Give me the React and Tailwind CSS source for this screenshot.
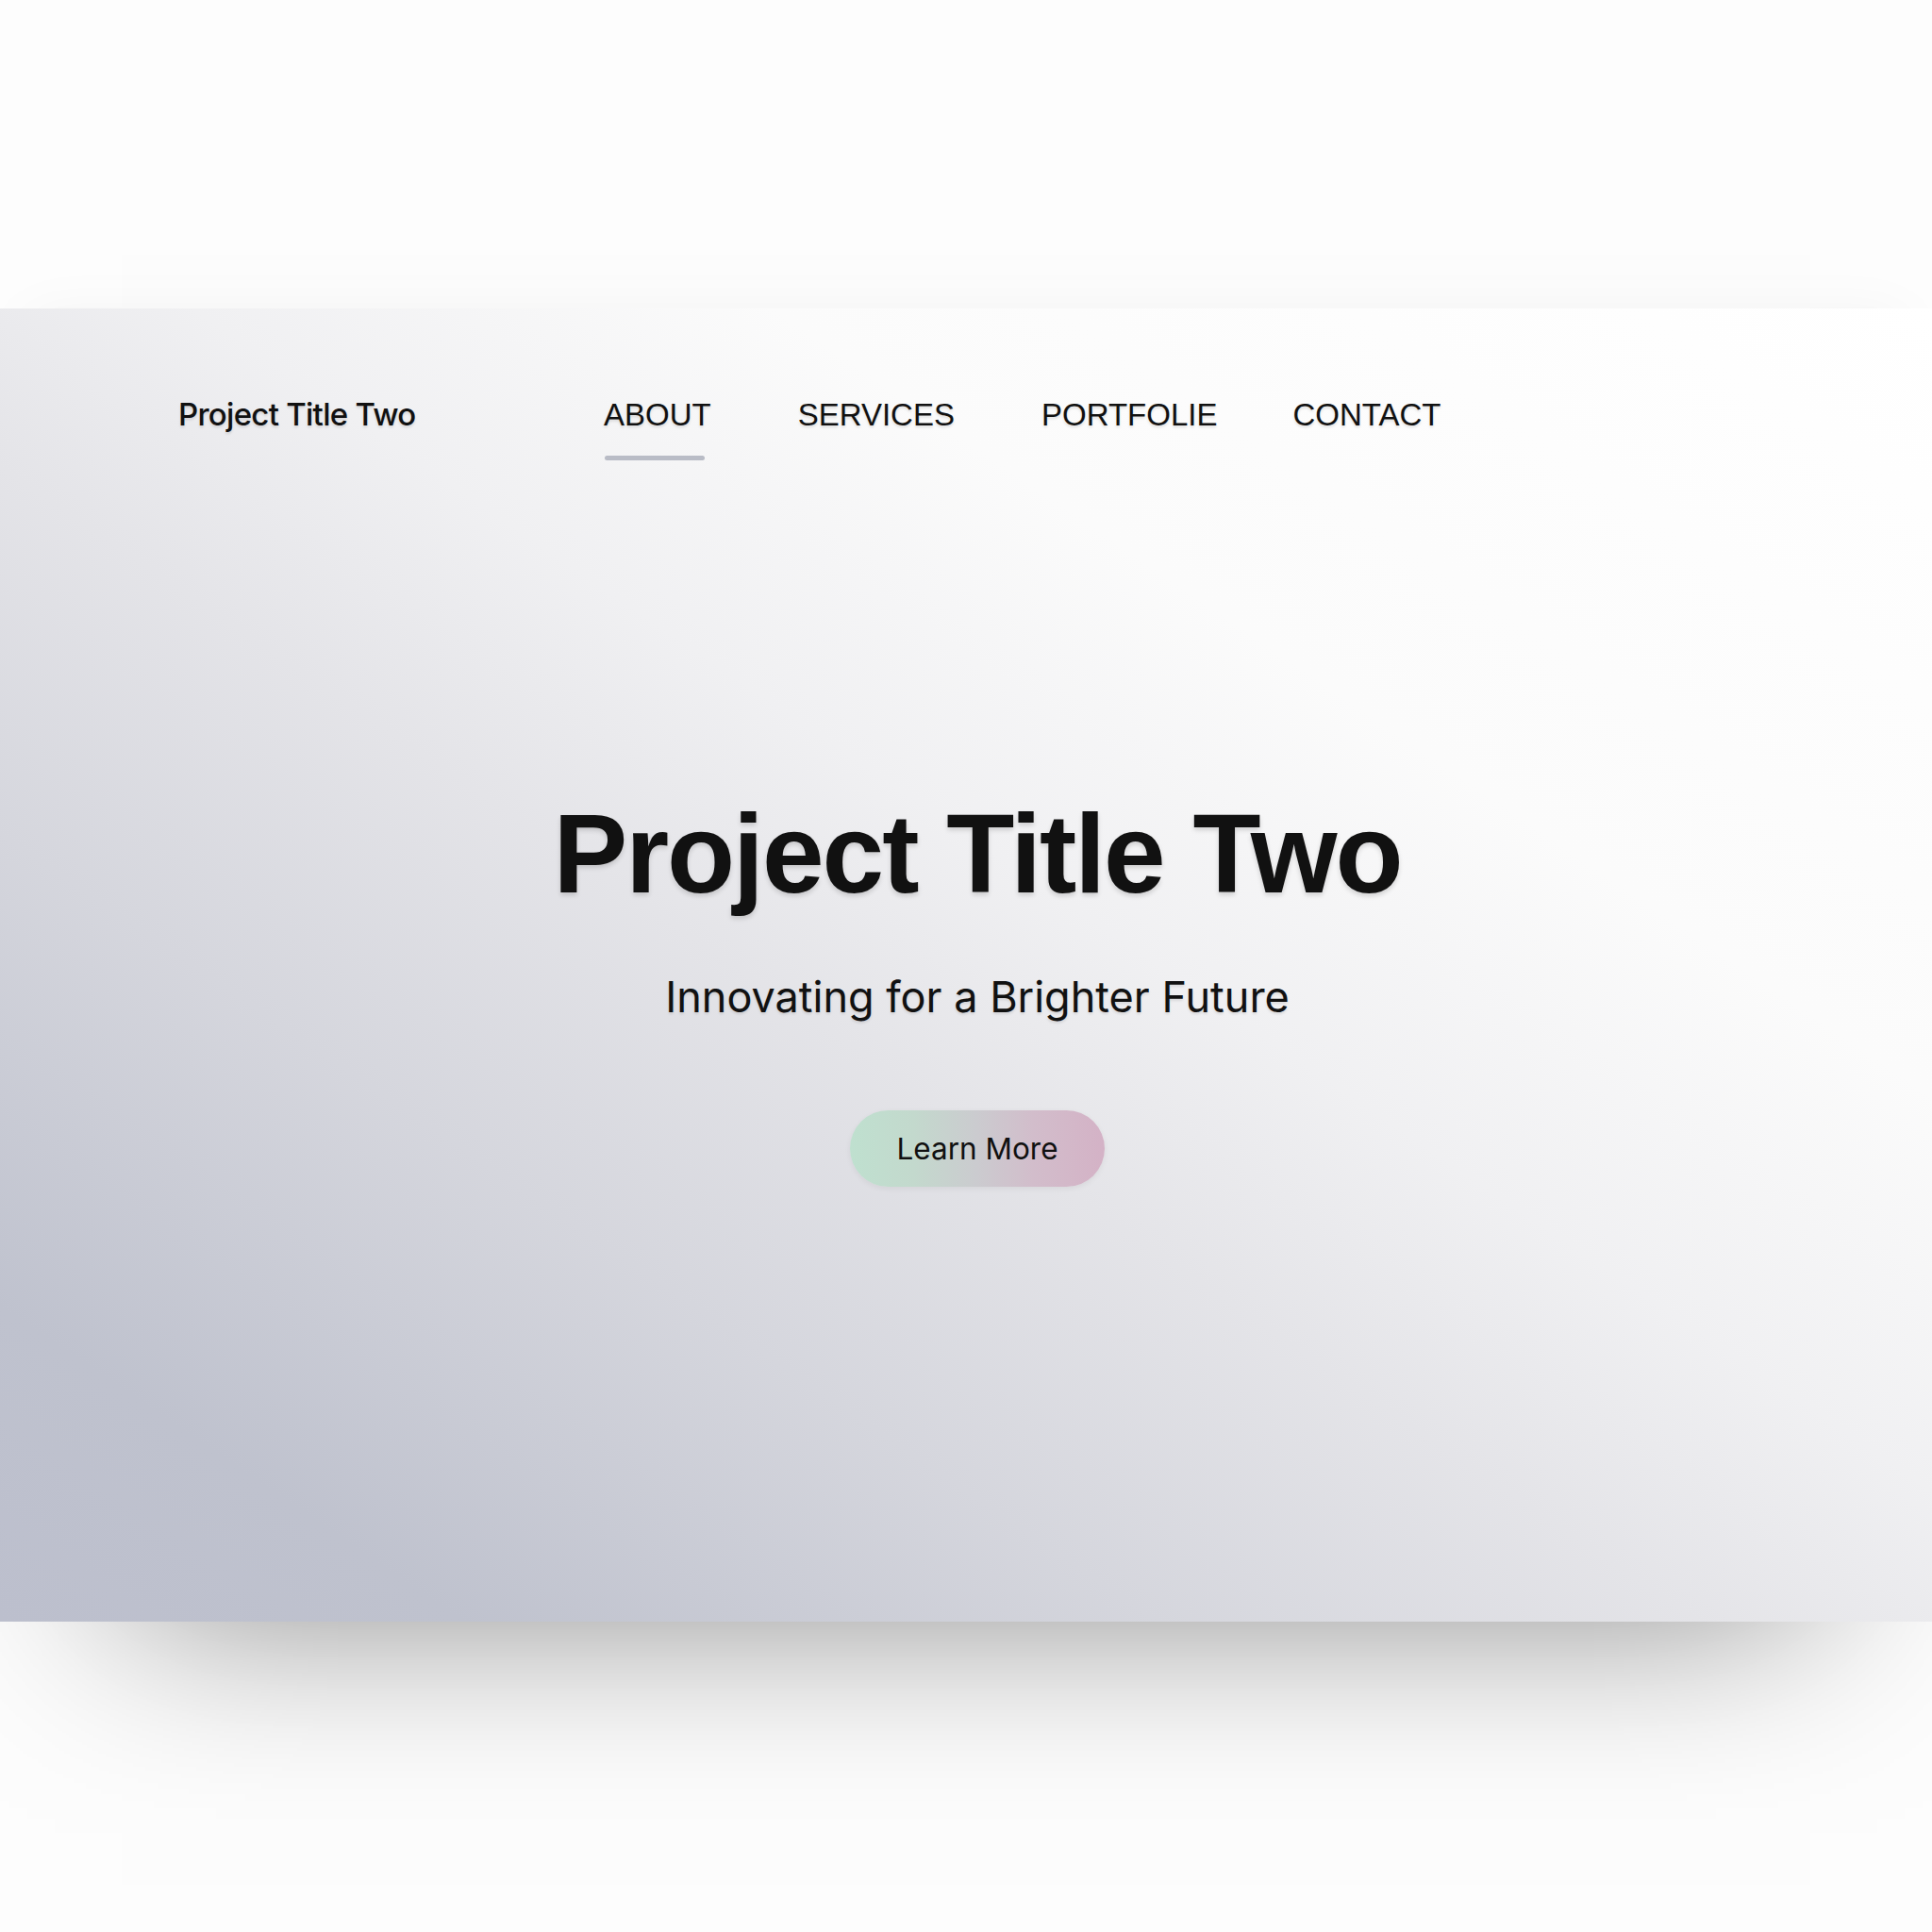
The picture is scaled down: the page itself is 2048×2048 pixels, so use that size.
import React from "react";

const navLinks = [
    { label: "ABOUT", active: true, gap: "ml-0" },
    { label: "SERVICES", active: false, gap: "ml-[92px]" },
    { label: "PORTFOLIE", active: false, gap: "ml-[92px]" },
    { label: "CONTACT", active: false, gap: "ml-[80px]" },
];

const App = () => {
    return (
        <div className="min-h-[2048px] w-full bg-[#fdfdfd] pt-[327px] text-[#111111]">
            {/* hero card */}
            <section className="h-[1392px] w-full bg-[linear-gradient(to_top_right,#bcbfcd_0%,#bfc2ce_12%,#d5d6dd_30%,#e4e4e8_44%,#f0f0f2_55%,#fbfbfb_70%,#ffffff_100%)] shadow-[0_111px_200px_-130px_rgba(0,0,0,0.52),0_-20px_60px_-30px_rgba(0,0,0,0.05)]">
                <nav className="flex items-start pl-[189px] pt-[96px]">
                    <div className="w-[451px] font-['Inter',sans-serif] text-[33px] font-medium leading-none tracking-[-0.022em] [text-shadow:0_2px_3px_rgba(0,0,0,0.12)]">
                        Project Title Two
                    </div>
                    {navLinks.map((link) => (
                        <div key={link.label} className={`flex flex-col items-start ${link.gap}`}>
                            <a
                                href="#"
                                className="font-['Liberation_Sans',Arial,sans-serif] text-[33px] leading-none [text-shadow:0_2px_3px_rgba(0,0,0,0.12)]"
                            >
                                {link.label}
                            </a>
                            {link.active && <div className="ml-px mt-[27px] h-[5px] w-[106px] rounded-full bg-[#b9bcc6]"></div>}
                        </div>
                    ))}
                </nav>

                <div className="flex flex-col items-center pl-[24px]">
                    <h1 className="mt-[358px] font-['Liberation_Sans',Arial,sans-serif] text-[118px] font-bold leading-none tracking-[-0.017em] [text-shadow:0_3px_5px_rgba(0,0,0,0.15)]">
                        Project Title Two
                    </h1>
                    <p className="mt-[70px] font-['Inter',sans-serif] text-[45px] leading-none [text-shadow:0_2px_3px_rgba(0,0,0,0.1)]">
                        Innovating for a Brighter Future
                    </p>
                    <button className="mt-[98px] flex h-[81px] w-[270px] items-center justify-center rounded-full bg-[linear-gradient(90deg,#bfe0cf_0%,#c3d9cd_25%,#cbcbcf_50%,#d2bdcb_72%,#d4b2c6_100%)] font-['Inter',sans-serif] text-[31.5px] leading-none shadow-[0_2px_6px_rgba(0,0,0,0.06)]">
                        Learn More
                    </button>
                </div>
            </section>
        </div>
    );
};

export default App;
